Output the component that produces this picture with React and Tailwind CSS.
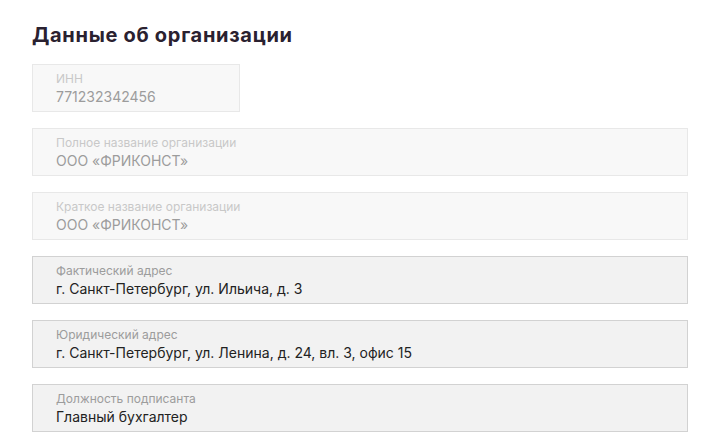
import React from "react";

const fields = [
  { label: "Полное название организации", value: "ООО «ФРИКОНСТ»", disabled: true },
  { label: "Краткое название организации", value: "ООО «ФРИКОНСТ»", disabled: true },
  { label: "Фактический адрес", value: "г. Санкт-Петербург, ул. Ильича, д. 3" },
  { label: "Юридический адрес", value: "г. Санкт-Петербург, ул. Ленина, д. 24, вл. 3, офис 15" },
  { label: "Должность подписанта", value: "Главный бухгалтер" },
];

function Field({ label, value, disabled, className = "" }) {
  return (
    <div
      className={
        "h-12 border pl-[23px] pr-4 pt-[6px] pb-[4px] flex flex-col " +
        (disabled ? "bg-[#f8f8f8] border-[#e8e8e8] " : "bg-[#f2f2f2] border-[#d2d2d2] ") +
        className
      }
    >
      <div className={"text-[12px] leading-4 " + (disabled ? "text-[#c8c8c8]" : "text-[#9c9c9c]")}>{label}</div>
      <div className={"text-[14px] leading-5 " + (disabled ? "text-[#9c9c9c]" : "text-[#222222]")}>{value}</div>
    </div>
  );
}

export default function App() {
  return (
    <div className="w-[720px] h-[448px] bg-white overflow-hidden pl-8 pr-8 pt-[21px]" style={{ fontFamily: "Inter, 'Noto Sans', sans-serif" }}>
      <h1 className="text-[20px] leading-7 font-bold text-[#2a2130] tracking-[0.7px]">Данные об организации</h1>
      <div className="mt-[15px] flex flex-col gap-4">
        <Field label="ИНН" value="771232342456" disabled className="w-[208px]" />
        {fields.map((f) => (
          <Field key={f.label} {...f} className="w-[656px]" />
        ))}
      </div>
    </div>
  );
}
